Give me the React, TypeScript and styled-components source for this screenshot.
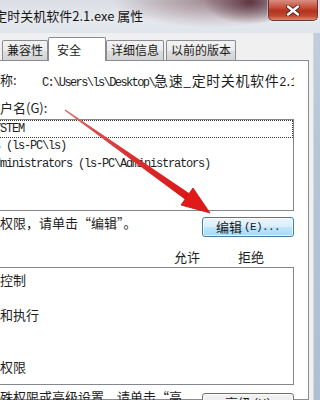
import React from "react";
import styled, { createGlobalStyle } from "styled-components";

const CJK = `"Noto Sans CJK SC", "Noto Sans", sans-serif`;
const MONO = `"Liberation Mono", "Noto Sans CJK SC", monospace`;

const Global = createGlobalStyle`
  html, body { margin: 0; padding: 0; overflow: hidden; background: #b8c7d7; }
  #root { width: 320px; height: 400px; overflow: hidden; }
`;

const Window = styled.div`
  position: relative;
  width: 370px;
  height: 400px;
  margin-left: -50px;
  display: flex;
  flex-direction: column;
  background: linear-gradient(180deg, #c3d0de 0%, #b5c5d6 40%, #aebfd1 100%);
  font-family: ${CJK};
  color: #1e1e1e;
`;

const TitleBar = styled.div`
  height: 33px;
  flex: none;
  display: flex;
  align-items: flex-start;
  padding-left: 11px;
  background:
    radial-gradient(46px 22px at 300px 2px, rgba(88, 46, 58, 0.95), rgba(88, 46, 58, 0) 100%),
    radial-gradient(100px 28px at 262px 0px, rgba(135, 98, 106, 0.7), rgba(135, 98, 106, 0) 100%),
    linear-gradient(180deg, #dadee4 0%, #e6e9ed 60%, #dfe5eb 100%);
`;

const TitleText = styled.div`
  margin-top: 6px;
  font-size: 13px;
  line-height: 20px;
  white-space: nowrap;
  color: #151515;
`;

const CloseButton = styled.div`
  margin-left: auto;
  margin-right: 2px;
  width: 50px;
  height: 21px;
  box-sizing: border-box;
  border: 1px solid #6a3434;
  border-top: none;
  border-radius: 0 0 5px 5px;
  background: linear-gradient(180deg, #d98e82 0%, #c9533f 35%, #b3321e 55%, #c24a31 80%, #e08b6f 100%);
  display: flex;
  align-items: center;
  justify-content: center;
  box-shadow: 0 0 0 1px rgba(255, 255, 255, 0.35);
`;

const Dialog = styled.div`
  flex: 1;
  margin-right: 6px;
  background: #f0f0f0;
  border-right: 1px solid #d2dae3;
  padding: 0 4px 0 6px;
  display: flex;
  flex-direction: column;
  min-height: 0;
`;

const TabRow = styled.div`
  height: 27px;
  flex: none;
  display: flex;
  align-items: flex-end;
  gap: 2px;
  padding-left: 10px;
`;

const Tab = styled.div<{ $active?: boolean }>`
  position: relative;
  box-sizing: border-box;
  height: ${(p) => (p.$active ? 24 : 20)}px;
  margin: ${(p) => (p.$active ? "0 -2px -1px" : "0")};
  padding: ${(p) => (p.$active ? "3px 24px 0 8px" : "0 4px")};
  border: 1px solid #898c95;
  border-bottom: none;
  border-radius: 2px 2px 0 0;
  background: ${(p) =>
    p.$active ? "#ffffff" : "linear-gradient(180deg, #f3f3f3 0%, #ebebeb 50%, #dedede 51%, #d4d4d4 100%)"};
  z-index: ${(p) => (p.$active ? 2 : 1)};
  font-size: 12px;
  line-height: 18px;
  white-space: nowrap;
  color: #1a1a1a;
`;

const Panel = styled.div`
  flex: 1;
  border: 1px solid #898c95;
  background: #ffffff;
  padding: 11px 14px 0 4px;
  display: flex;
  flex-direction: column;
  min-height: 0;
`;

const ObjectRow = styled.div`
  display: grid;
  grid-template-columns: 81px 1fr;
  height: 16px;
  line-height: 16px;
  font-size: 13px;
`;

const PathText = styled.div`
  font-family: ${MONO};
  font-size: 12px;
  letter-spacing: -1.6px;
  white-space: nowrap;
  overflow: hidden;
`;

const WideChars = styled.span`
  font-family: ${CJK};
  font-size: 14px;
  letter-spacing: 0.6px;
`;

const Label = styled.div<{ $gap: number }>`
  margin-top: ${(p) => p.$gap}px;
  font-size: 13px;
  line-height: 16px;
  white-space: nowrap;
`;

const ListBox = styled.div<{ $h: number; $top: number; $pad: number }>`
  margin-top: ${(p) => p.$top}px;
  height: ${(p) => p.$h}px;
  flex: none;
  box-sizing: border-box;
  border: 1px solid #828790;
  background: #ffffff;
  padding-top: ${(p) => p.$pad}px;
  overflow: hidden;
`;

const UserRow = styled.div<{ $focused?: boolean }>`
  height: 17.5px;
  box-sizing: border-box;
  display: flex;
  align-items: center;
  gap: 8px;
  padding-left: 1px;
  border: 1px ${(p) => (p.$focused ? "dotted #3a3a3a" : "solid transparent")};
  font-family: ${MONO};
  font-size: 12px;
  letter-spacing: -1.2px;
  white-space: nowrap;
`;

const PermRow = styled.div`
  height: 17.4px;
  display: flex;
  align-items: center;
  padding-left: 12px;
  font-size: 13px;
  white-space: nowrap;
`;

const ActionRow = styled.div<{ $gap: number }>`
  margin-top: ${(p) => p.$gap}px;
  display: flex;
  align-items: flex-start;
  justify-content: space-between;
  flex: none;
`;

const ActionText = styled.div<{ $w?: number }>`
  font-size: 13px;
  line-height: 16px;
  width: ${(p) => (p.$w ? `${p.$w}px` : "auto")};
  white-space: ${(p) => (p.$w ? "normal" : "nowrap")};
`;

const Button = styled.div<{ $hot?: boolean }>`
  margin-top: ${(p) => (p.$hot ? 2 : 4)}px;
  width: 92px;
  height: 20px;
  box-sizing: border-box;
  border: 1px solid ${(p) => (p.$hot ? "#3c7fb1" : "#707070")};
  border-radius: 3px;
  background: ${(p) =>
    p.$hot
      ? "linear-gradient(180deg, #eaf6fd 0%, #d9f0fc 48%, #bee6fd 52%, #a7d9f5 100%)"
      : "linear-gradient(180deg, #f2f2f2 0%, #ebebeb 48%, #dddddd 52%, #cfcfcf 100%)"};
  box-shadow: inset 0 0 0 1px rgba(255, 255, 255, 0.7);
  display: flex;
  align-items: center;
  justify-content: center;
  font-size: 13px;
  line-height: 18px;
  white-space: nowrap;
  color: #1a1a1a;
`;

const Mnemonic = styled.span`
  font-family: ${MONO};
  font-size: 11px;
  letter-spacing: -0.6px;
  margin-left: 2px;
`;

const PermHeader = styled.div`
  margin: 12px 11px 0 0;
  display: grid;
  grid-template-columns: 1fr 64px 64px;
  font-size: 13px;
  line-height: 16px;
  flex: none;
`;

const HeaderCell = styled.div`
  text-align: center;
`;

const ArrowLayer = styled.svg`
  position: absolute;
  left: 50px;
  top: 0;
  width: 320px;
  height: 400px;
  pointer-events: none;
`;

const UserIcon = () => (
  <svg width="16" height="16" viewBox="0 0 16 16">
    <circle cx="8" cy="5" r="3" fill="#6c8fb8" />
    <path d="M2 15c0-4 3-6 6-6s6 2 6 6z" fill="#4f79a8" />
  </svg>
);

const users = [
  { name: "SYSTEM", focused: true },
  { name: "ls (ls-PC\\ls)" },
  { name: "Administrators (ls-PC\\Administrators)" },
];

const perms = ["完全控制", "修改", "读取和执行", "读取", "写入", "特殊权限"];

const tabs = ["常规", "兼容性", "安全", "详细信息", "以前的版本"];

export default function App() {
  return (
    <>
      <Global />
      <Window>
        <TitleBar>
          <TitleText>急速_定时关机软件2.1.exe 属性</TitleText>
          <CloseButton>
            <svg width="14" height="11" viewBox="0 0 14 11">
              <path d="M2 1.5L12 9.5M12 1.5L2 9.5" stroke="#5a2420" strokeWidth="4.2" strokeLinecap="round" />
              <path d="M2 1.5L12 9.5M12 1.5L2 9.5" stroke="#ffffff" strokeWidth="2.4" strokeLinecap="round" />
            </svg>
          </CloseButton>
        </TitleBar>
        <Dialog>
          <TabRow>
            {tabs.map((t) => (
              <Tab key={t} $active={t === "安全"}>
                {t}
              </Tab>
            ))}
          </TabRow>
          <Panel>
            <ObjectRow>
              <span>对象名称:</span>
              <PathText>
                C:\Users\ls\Desktop\<WideChars>急速_定时关机软件</WideChars>2.1.exe
              </PathText>
            </ObjectRow>
            <Label $gap={12}>组或用户名(G):</Label>
            <ListBox $h={92} $top={3} $pad={0}>
              {users.map((u) => (
                <UserRow key={u.name} $focused={u.focused}>
                  <UserIcon />
                  {u.name}
                </UserRow>
              ))}
            </ListBox>
            <ActionRow $gap={4}>
              <ActionText>要更改权限，请单击“编辑”。</ActionText>
              <Button $hot>
                编辑<Mnemonic>(E)...</Mnemonic>
              </Button>
            </ActionRow>
            <PermHeader>
              <span />
              <HeaderCell>允许</HeaderCell>
              <HeaderCell>拒绝</HeaderCell>
            </PermHeader>
            <ListBox $h={118} $top={2} $pad={3}>
              {perms.map((p) => (
                <PermRow key={p}>{p}</PermRow>
              ))}
            </ListBox>
            <ActionRow $gap={4}>
              <ActionText $w={230}>有关特殊权限或高级设置，请单击“高级”。</ActionText>
              <Button>
                高级<Mnemonic>(V)</Mnemonic>
              </Button>
            </ActionRow>
          </Panel>
        </Dialog>
        <ArrowLayer viewBox="0 0 320 400">
          <defs>
            <linearGradient id="shaft" x1="65" y1="110" x2="190" y2="197" gradientUnits="userSpaceOnUse">
              <stop offset="0" stopColor="#d86a6a" />
              <stop offset="0.5" stopColor="#dc3030" />
              <stop offset="1" stopColor="#d91818" />
            </linearGradient>
          </defs>
          <polygon points="64.6,110.6 65.4,109.4 189.6,193.6 185.4,199.8" fill="url(#shaft)" />
          <polygon points="210,213 181,205 193,188" fill="#e01a1a" stroke="#c21212" strokeWidth="0.8" />
        </ArrowLayer>
      </Window>
    </>
  );
}
